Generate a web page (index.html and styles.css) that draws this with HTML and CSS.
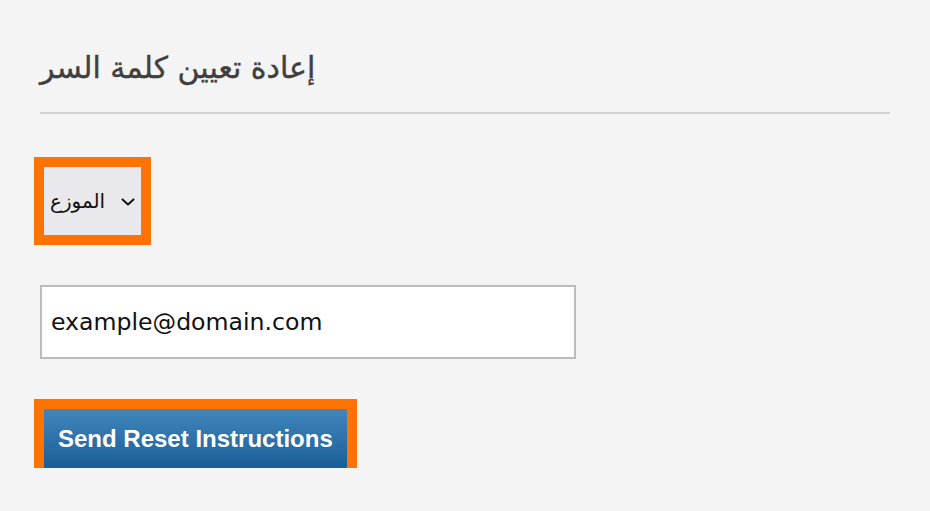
FILE: index.html
```html
<!DOCTYPE html>
<html lang="ar">
<head>
<meta charset="utf-8">
<title>إعادة تعيين كلمة السر</title>
<link rel="stylesheet" href="styles.css">
</head>
<body>
<main class="page">
  <h1 class="title">إعادة تعيين كلمة السر</h1>
  <form class="form">
    <div class="select" role="combobox" aria-expanded="false">
      <span class="select-label">الموزع</span>
      <svg class="chevron" width="14" height="8" viewBox="0 0 14 8" aria-hidden="true"><polyline points="1.5,1.5 7,6.5 12.5,1.5" fill="none" stroke="#111" stroke-width="2" stroke-linecap="round" stroke-linejoin="round"/></svg>
    </div>
    <input class="email" type="text" value="example@domain.com">
    <button class="submit" type="button">Send Reset Instructions</button>
  </form>
</main>
</body>
</html>
```

FILE: styles.css
```css
html, body {
  margin: 0;
  padding: 0;
  background: #f4f4f4;
}
body {
  font-family: "DejaVu Sans", "Liberation Sans", sans-serif;
  color: #222;
}
.page {
  padding: 0 40px;
}
.title {
  margin: 0;
  padding: 47px 0 23px;
  font-family: "DejaVu Sans", sans-serif;
  font-weight: normal;
  font-size: 30px;
  line-height: 42px;
  color: #3f3f3f;
  -webkit-text-stroke: 0.4px #3f3f3f;
  border-bottom: 2px solid #d3d3d3;
}
.form {
  display: flex;
  flex-direction: column;
  align-items: flex-start;
}
.select {
  margin: 53px 0 0 4px;
  box-sizing: border-box;
  width: 97px;
  height: 68px;
  padding: 0 6px;
  display: flex;
  align-items: center;
  justify-content: space-between;
  background: #e9e8ed;
  outline: 10px solid #ff7300;
  font-family: "DejaVu Sans", sans-serif;
  font-size: 20px;
  color: #111;
}
.chevron {
  display: block;
  margin-top: 2px;
}
.email {
  margin-top: 50px;
  box-sizing: border-box;
  width: 536px;
  height: 74px;
  padding: 0 9px;
  border: 2px solid #bcbcbc;
  background: #fff;
  font-family: "DejaVu Sans", sans-serif;
  font-size: 23.6px;
  color: #111;
  outline: none;
}
.submit {
  margin: 50px 0 0 4px;
  box-sizing: border-box;
  height: 59px;
  padding: 0 14px;
  border: none;
  background: linear-gradient(to bottom, #4186bd, #1b5e97);
  outline: 10px solid #ff7300;
  font-family: "Liberation Sans", Arial, sans-serif;
  font-weight: bold;
  font-size: 24px;
  color: #fff;
}
```
